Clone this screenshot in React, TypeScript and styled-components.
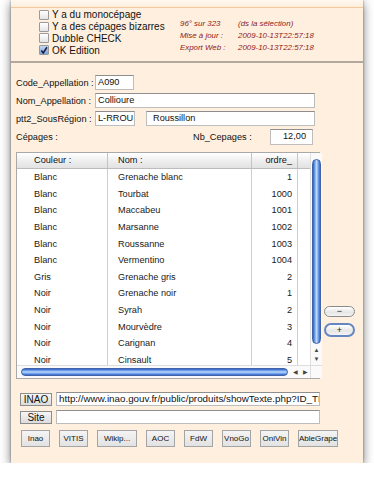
import styled, { createGlobalStyle } from "styled-components"

const GlobalStyle = createGlobalStyle`
    html, body {
        margin: 0;
        padding: 0;
        background: #ffffff;
        overflow: hidden;
    }
    body {
        font-family: "Liberation Sans", Arial, sans-serif;
        color: #111;
    }
`

type Cepage = {
    couleur: string
    nom: string
    ordre: number
}

const cepages: Cepage[] = [
    { couleur: "Blanc", nom: "Grenache blanc", ordre: 1 },
    { couleur: "Blanc", nom: "Tourbat", ordre: 1000 },
    { couleur: "Blanc", nom: "Maccabeu", ordre: 1001 },
    { couleur: "Blanc", nom: "Marsanne", ordre: 1002 },
    { couleur: "Blanc", nom: "Roussanne", ordre: 1003 },
    { couleur: "Blanc", nom: "Vermentino", ordre: 1004 },
    { couleur: "Gris", nom: "Grenache gris", ordre: 2 },
    { couleur: "Noir", nom: "Grenache noir", ordre: 1 },
    { couleur: "Noir", nom: "Syrah", ordre: 2 },
    { couleur: "Noir", nom: "Mourvèdre", ordre: 3 },
    { couleur: "Noir", nom: "Carignan", ordre: 4 },
    { couleur: "Noir", nom: "Cinsault", ordre: 5 },
]

const flags = [
    { label: "Y a du monocépage", checked: false },
    { label: "Y a des cépages bizarres", checked: false },
    { label: "Dubble CHECK", checked: false },
    { label: "OK Edition", checked: true },
]

const links = ["Inao", "VITIS", "Wikip...", "AOC", "FdW", "VnoGo", "OniVin", "AbleGrape"]

export default function App(){
    return(
        <>
            <GlobalStyle/>
            <Window>
                <TopBand/>
                <Header>
                    <Flags>
                        {flags.map(f => (
                            <FlagRow key={f.label}>
                                <Box $checked={f.checked}>
                                    {f.checked ? (
                                        <svg width="9" height="9" viewBox="0 0 9 9">
                                            <path d="M1.5 4.5 L3.6 7.2 L7.8 0.8" fill="none" stroke="#1a1a3a" strokeWidth="1.7"/>
                                        </svg>
                                    ) : null}
                                </Box>
                                {f.label}
                            </FlagRow>
                        ))}
                    </Flags>
                    <Info>
                        <InfoText>96° sur 323</InfoText>
                        <InfoText>(ds la sélection)</InfoText>
                        <InfoText>Mise à jour :</InfoText>
                        <InfoText>2009-10-13T22:57:18</InfoText>
                        <InfoText>Export Web :</InfoText>
                        <InfoText>2009-10-13T22:57:18</InfoText>
                    </Info>
                </Header>
                <Separator/>
                <Form>
                    <FieldRow>
                        <Label>Code_Appellation :</Label>
                        <Field $w={39}>A090</Field>
                    </FieldRow>
                    <FieldRow>
                        <Label>Nom_Appellation :</Label>
                        <Field $w={220}>Collioure</Field>
                    </FieldRow>
                    <FieldRow>
                        <Label>ptt2_SousRégion :</Label>
                        <Field $w={40}>L-RROU</Field>
                        <Field $w={169} $ml={11} $pl={6}>Roussillon</Field>
                    </FieldRow>
                    <FieldRow $h={16}>
                        <Label $w={177}>Cépages :</Label>
                        <Label $w={77}>Nb_Cepages :</Label>
                        <Field $w={43} $right>12,00</Field>
                    </FieldRow>
                </Form>
                <TableArea>
                    <TableBox>
                        <DataArea>
                            <HeadRow>
                                <HeadCell $w={91} $pl={17}>Couleur :</HeadCell>
                                <HeadCell $w={144} $pl={10}>Nom :</HeadCell>
                                <HeadCell $w={46} $right>ordre_</HeadCell>
                                <HeadFill/>
                            </HeadRow>
                            {cepages.map((c, i) => (
                                <Row key={i}>
                                    <Cell $w={91} $pl={17}>{c.couleur}</Cell>
                                    <Cell $w={144} $pl={10}>{c.nom}</Cell>
                                    <Cell $w={46} $right>{c.ordre}</Cell>
                                </Row>
                            ))}
                            <ColumnLines>
                                <ColLine $w={91}/>
                                <ColLine $w={144}/>
                                <ColLine $w={46}/>
                            </ColumnLines>
                        </DataArea>
                        <VScroll>
                            <VThumb/>
                            <Arrows>
                                <Arrow>▲</Arrow>
                                <Arrow>▼</Arrow>
                            </Arrows>
                        </VScroll>
                        <HScroll>
                            <HThumb/>
                            <HArrows>
                                <Arrow>◀</Arrow>
                                <Arrow>▶</Arrow>
                            </HArrows>
                        </HScroll>
                        <Corner/>
                    </TableBox>
                    <SideButtons>
                        <PillButton>−</PillButton>
                        <PillButton $focused>+</PillButton>
                    </SideButtons>
                </TableArea>
                <LinkRows>
                    <LinkRow>
                        <SmallButton>INAO</SmallButton>
                        <UrlField>http://www.inao.gouv.fr/public/produits/showTexte.php?ID_TEXTE=1234</UrlField>
                    </LinkRow>
                    <LinkRow>
                        <SmallButton>Site</SmallButton>
                        <UrlField></UrlField>
                    </LinkRow>
                </LinkRows>
                <ButtonBar>
                    {links.map(l => <BarButton key={l} $wide={l.length > 7}>{l}</BarButton>)}
                </ButtonBar>
            </Window>
        </>
    )
}

const Window = styled.div`
    margin-left: 11px;
    width: 352px;
    height: 463px;
    background: #ffefdf;
    box-shadow: 0 3px 10px rgba(0, 0, 0, 0.55), 0 0 2px rgba(0, 0, 0, 0.4);
    display: flex;
    flex-direction: column;
`
const TopBand = styled.div`
    height: 7px;
    background: linear-gradient(#fff8f0, #fdeedd);
    border-bottom: 1px solid #f3c89c;
`
const Header = styled.div`
    display: flex;
    height: 53px;
`
const Flags = styled.div`
    display: flex;
    flex-direction: column;
    padding: 1px 0 0 28px;
    width: 141px;
    flex-shrink: 0;
`
const FlagRow = styled.div`
    display: flex;
    align-items: center;
    height: 11.8px;
    font-size: 10px;
    color: #111;
    white-space: nowrap;
`
const Box = styled.span<{ $checked?: boolean }>`
    width: 8px;
    height: 8px;
    margin-right: 3px;
    border: 1px solid #9a9a9a;
    border-radius: 1px;
    background: ${p => p.$checked ? "linear-gradient(#c4d8f4, #7aa2dc)" : "linear-gradient(#ffffff, #e4e4e4)"};
    display: flex;
    align-items: center;
    justify-content: center;
`
const Info = styled.div`
    display: grid;
    grid-template-columns: 58px auto;
    grid-auto-rows: 12px;
    padding: 9px 0 0 0;
    align-items: center;
`
const InfoText = styled.span`
    font-style: italic;
    font-size: 7.9px;
    color: #8e2020;
    white-space: nowrap;
`
const Separator = styled.div`
    height: 2px;
    background: #b3a89e;
`
const Form = styled.div`
    display: flex;
    flex-direction: column;
    gap: 3px;
    padding: 12px 0 0 5px;
`
const FieldRow = styled.div<{ $h?: number }>`
    display: flex;
    align-items: center;
    height: ${p => p.$h ?? 15}px;
`
const Label = styled.span<{ $w?: number }>`
    flex: 0 0 ${p => p.$w ?? 79}px;
    font-size: 9.2px;
    white-space: nowrap;
`
const Field = styled.div<{ $w: number; $ml?: number; $pl?: number; $right?: boolean }>`
    box-sizing: border-box;
    flex: 0 0 ${p => p.$w}px;
    height: 100%;
    margin-left: ${p => p.$ml ?? 0}px;
    padding: 0 ${p => p.$right ? 6 : 2}px 0 ${p => p.$pl ?? 2}px;
    background: #ffffff;
    border: 1px solid #bdbdbd;
    border-top-color: #8e8e8e;
    font-size: 9.2px;
    line-height: 13px;
    text-align: ${p => p.$right ? "right" : "left"};
    white-space: nowrap;
    overflow: hidden;
`
const TableArea = styled.div`
    display: flex;
    margin: 7px 0 0 5px;
`
const TableBox = styled.div`
    box-sizing: border-box;
    width: 304px;
    height: 227px;
    background: #ffffff;
    border: 1px solid #a9a9a9;
    display: grid;
    grid-template-columns: 1fr 12px;
    grid-template-rows: 1fr 13px;
`
const DataArea = styled.div`
    position: relative;
    overflow: hidden;
`
const HeadRow = styled.div`
    display: flex;
    height: 15px;
    background: linear-gradient(#ffffff, #ececec 60%, #e2e2e2);
    border-bottom: 1px solid #bcbcbc;
`
const HeadCell = styled.div<{ $w: number; $pl?: number; $right?: boolean }>`
    box-sizing: border-box;
    flex: 0 0 ${p => p.$w}px;
    padding: 0 ${p => p.$right ? 5 : 0}px 0 ${p => p.$pl ?? 0}px;
    font-size: 9.2px;
    line-height: 15px;
    text-align: ${p => p.$right ? "right" : "left"};
    border-right: 1px solid #c4c4c4;
`
const HeadFill = styled.div`
    flex: 1;
`
const Row = styled.div`
    display: flex;
    height: 16.6px;
    align-items: center;
`
const Cell = styled.div<{ $w: number; $pl?: number; $right?: boolean }>`
    box-sizing: border-box;
    flex: 0 0 ${p => p.$w}px;
    padding: 0 ${p => p.$right ? 6 : 0}px 0 ${p => p.$pl ?? 0}px;
    font-size: 9.2px;
    color: #1a1a1a;
    text-align: ${p => p.$right ? "right" : "left"};
    white-space: nowrap;
`
const ColumnLines = styled.div`
    position: absolute;
    top: 16px;
    left: 0;
    bottom: 0;
    display: flex;
    pointer-events: none;
`
const ColLine = styled.div<{ $w: number }>`
    box-sizing: border-box;
    flex: 0 0 ${p => p.$w}px;
    border-right: 1px solid #cfcfcf;
`
const VScroll = styled.div`
    display: flex;
    flex-direction: column;
    align-items: center;
    padding-top: 6px;
    background: #fafafa;
    border-left: 1px solid #dedede;
`
const aqua = `
    background: linear-gradient(var(--dir), #2e5cc4 0%, #6d9fe8 25%, #bcd8fb 50%, #79aaee 72%, #3564c8 100%);
    border: 1px solid #3f62a8;
`
const VThumb = styled.div`
    --dir: 90deg;
    ${aqua}
    box-sizing: border-box;
    width: 9px;
    height: 185px;
    border-radius: 5px;
`
const Arrows = styled.div`
    display: flex;
    flex-direction: column;
    margin-top: 2px;
`
const Arrow = styled.span`
    font-size: 6px;
    line-height: 9px;
    color: #444;
    text-align: center;
    width: 10px;
`
const HScroll = styled.div`
    display: flex;
    align-items: center;
    padding-left: 4px;
    background: #fafafa;
    border-top: 1px solid #dedede;
`
const HThumb = styled.div`
    --dir: 180deg;
    ${aqua}
    box-sizing: border-box;
    width: 267px;
    height: 8px;
    border-radius: 5px;
`
const HArrows = styled.div`
    display: flex;
    margin-left: 2px;
`
const Corner = styled.div`
    background: #fafafa;
    border-top: 1px solid #dedede;
    border-left: 1px solid #dedede;
`
const SideButtons = styled.div`
    display: flex;
    flex-direction: column;
    gap: 6px;
    margin: 154px 0 0 4px;
`
const PillButton = styled.div<{ $focused?: boolean }>`
    box-sizing: border-box;
    width: 31px;
    height: ${p => p.$focused ? 14 : 11}px;
    border-radius: 7px;
    border: ${p => p.$focused ? "2px solid #6486c2" : "1px solid #8a8a8a"};
    background: linear-gradient(#ffffff, #e6e6e6 60%, #f4f4f4);
    font-size: 9px;
    line-height: ${p => p.$focused ? 10 : 9}px;
    text-align: center;
    color: #222;
`
const LinkRows = styled.div`
    display: flex;
    flex-direction: column;
    gap: 4px;
    margin: 13px 0 0 9px;
`
const LinkRow = styled.div`
    display: flex;
    align-items: center;
    gap: 4px;
    height: 14px;
`
const SmallButton = styled.div`
    box-sizing: border-box;
    flex: 0 0 32px;
    height: 13px;
    background: linear-gradient(#f6f6f6, #dcdcdc);
    border: 1px solid #8c8c8c;
    font-size: 10px;
    line-height: 11px;
    text-align: center;
`
const UrlField = styled.div`
    box-sizing: border-box;
    flex: 0 0 264px;
    height: 14px;
    padding: 0 2px;
    background: #ffffff;
    border: 1px solid #bdbdbd;
    border-top-color: #8e8e8e;
    font-size: 9.8px;
    line-height: 12px;
    white-space: nowrap;
    overflow: hidden;
`
const ButtonBar = styled.div`
    display: flex;
    gap: 9px;
    margin: 6px 0 0 10px;
`
const BarButton = styled.div<{ $wide?: boolean }>`
    box-sizing: border-box;
    flex: 0 0 ${p => p.$wide ? 40 : 29}px;
    height: 17px;
    background: linear-gradient(#f4f4f4, #e2e2e2);
    border: 1px solid #a4a4a4;
    font-size: 8px;
    line-height: 15px;
    text-align: center;
    white-space: nowrap;
    overflow: hidden;
`
